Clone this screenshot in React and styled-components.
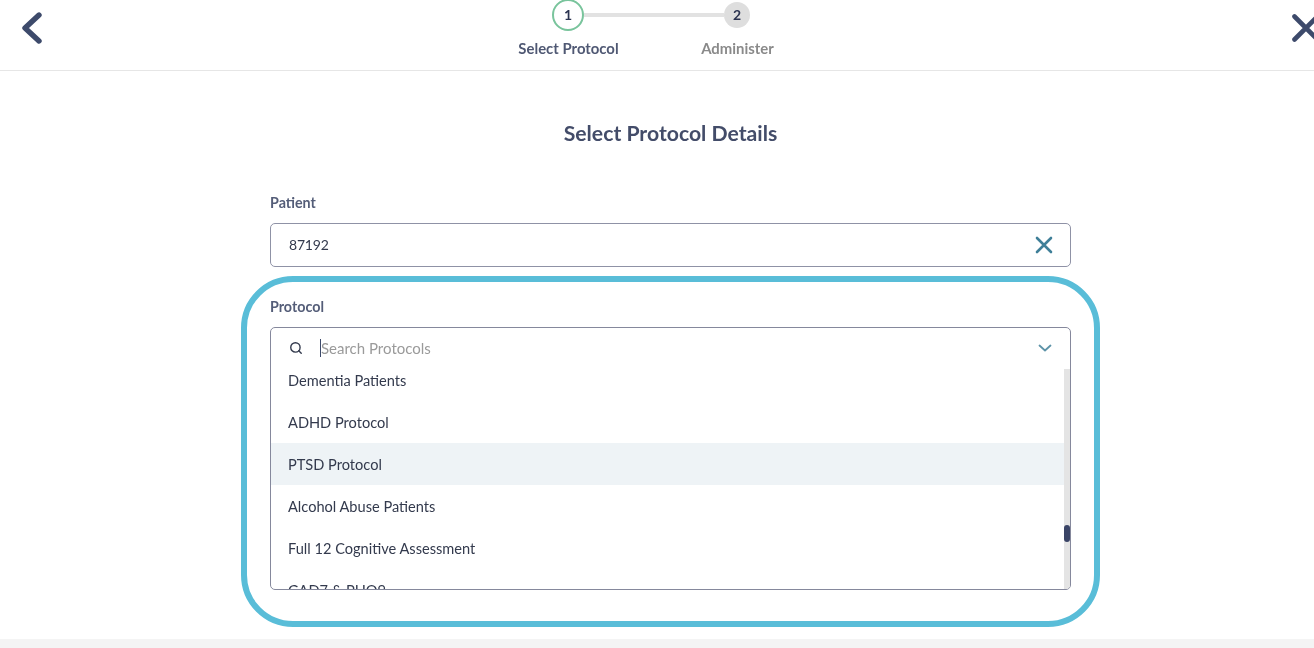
import React from "react";
import styled, { createGlobalStyle } from "styled-components";
import { Search } from "lucide-react";

const protocols = [
  "Dementia Patients",
  "ADHD Protocol",
  "PTSD Protocol",
  "Alcohol Abuse Patients",
  "Full 12 Cognitive Assessment",
  "GAD7 & PHQ9",
];

const App = () => {
  return (
    <Page>
      <GlobalStyle />
      <Header>
        <IconButton $top={12}>
          <svg width="20" height="32" viewBox="0 0 20 32">
            <path d="M17 3L3 16L17 29" fill="none" stroke="#3d4a6b" strokeWidth="5.4" strokeLinecap="round" strokeLinejoin="round" />
          </svg>
        </IconButton>
        <Stepper>
          <Track>
            <StepCircle $active>1</StepCircle>
            <TrackLine />
            <StepCircle>2</StepCircle>
          </Track>
          <StepLabels>
            <StepLabel $active>Select Protocol</StepLabel>
            <StepLabel>Administer</StepLabel>
          </StepLabels>
        </Stepper>
        <IconButton $top={14} $push>
          <svg width="28" height="28" viewBox="0 0 28 28">
            <path d="M2.5 2.5L25.5 25.5M25.5 2.5L2.5 25.5" fill="none" stroke="#3d4a6b" strokeWidth="4.6" strokeLinecap="round" />
          </svg>
        </IconButton>
      </Header>
      <Main>
        <Title>Select Protocol Details</Title>
        <PatientField>
          <Label>Patient</Label>
          <InputBox>
            <Value>87192</Value>
            <svg width="18" height="18" viewBox="0 0 18 18">
              <path d="M2 2L16 16M16 2L2 16" fill="none" stroke="#3f7f98" strokeWidth="2.6" strokeLinecap="round" />
            </svg>
          </InputBox>
        </PatientField>
        <Highlight>
          <Label>Protocol</Label>
          <Select>
            <SearchRow>
              <Search size={14} color="#333a4d" strokeWidth={2.4} />
              <Placeholder>Search Protocols</Placeholder>
              <svg width="14" height="8" viewBox="0 0 14 8">
                <path d="M1.5 1.5L7 6.5L12.5 1.5" fill="none" stroke="#5d93a8" strokeWidth="1.8" strokeLinecap="round" strokeLinejoin="round" />
              </svg>
            </SearchRow>
            <ListArea>
              <List>
                {protocols.map((name) => (
                  <Option key={name} $hovered={name === "PTSD Protocol"}>
                    {name}
                  </Option>
                ))}
              </List>
              <ScrollTrack>
                <ScrollThumb />
              </ScrollTrack>
            </ListArea>
          </Select>
        </Highlight>
      </Main>
      <Footer />
    </Page>
  );
};

const GlobalStyle = createGlobalStyle`
  html, body {
    margin: 0;
    padding: 0;
    height: 100%;
    overflow: hidden;
    background: #fff;
  }
  * {
    box-sizing: border-box;
  }
`;

const Page = styled.div`
  width: 1341px;
  height: 648px;
  display: flex;
  flex-direction: column;
  overflow: hidden;
  font-family: "Lato", "Liberation Sans", sans-serif;
  color: #333a4d;
  filter: blur(0.4px);
`;

const Header = styled.header`
  height: 71px;
  flex: none;
  display: flex;
  align-items: flex-start;
  padding: 0 22px;
  border-bottom: 1px solid #e6e6e6;
`;

const IconButton = styled.div`
  display: flex;
  margin-top: ${(p) => p.$top}px;
  margin-left: ${(p) => (p.$push ? "auto" : "0")};
  margin-right: ${(p) => (p.$push ? "-1px" : "0")};
`;

const Stepper = styled.div`
  width: 338px;
  margin-left: 442px;
  margin-top: -2px;
`;

const Track = styled.div`
  display: flex;
  align-items: center;
  height: 33px;
  padding: 0 72px 0 68px;
`;

const StepCircle = styled.div`
  flex: none;
  display: flex;
  align-items: center;
  justify-content: center;
  width: ${(p) => (p.$active ? "32px" : "26px")};
  height: ${(p) => (p.$active ? "32px" : "26px")};
  border-radius: 50%;
  border: ${(p) => (p.$active ? "2px solid #79c49c" : "none")};
  background: ${(p) => (p.$active ? "#fff" : "#dedede")};
  font-size: 14px;
  font-weight: 700;
  color: #2b3350;
`;

const TrackLine = styled.div`
  flex: 1;
  height: 4px;
  background: #e2e2e2;
`;

const StepLabels = styled.div`
  display: grid;
  grid-template-columns: 169px 169px;
  margin-top: 8px;
`;

const StepLabel = styled.div`
  text-align: center;
  font-size: 14.9px;
  line-height: 18px;
  font-weight: 700;
  color: ${(p) => (p.$active ? "#4f5873" : "#8a8a8a")};
`;

const Main = styled.main`
  width: 859px;
  margin-left: 241px;
  flex: none;
`;

const Title = styled.h1`
  margin: 49px 0 0;
  font-size: 21.2px;
  line-height: 26px;
  font-weight: 700;
  text-align: center;
  color: #434c69;
`;

const PatientField = styled.div`
  margin: 48px 29px 0;
`;

const Label = styled.div`
  font-size: 14.3px;
  line-height: 18px;
  font-weight: 700;
  color: #545d78;
  margin-bottom: 11px;
`;

const InputBox = styled.div`
  height: 44px;
  display: flex;
  align-items: center;
  justify-content: space-between;
  padding: 0 17px 0 18px;
  border: 1px solid #8f92a6;
  border-radius: 5px;
`;

const Value = styled.span`
  font-size: 14px;
  letter-spacing: -0.2px;
  margin-bottom: 2px;
  color: #333a4d;
`;

const Highlight = styled.section`
  height: 351px;
  margin-top: 9px;
  padding: 16px 23px 0;
  border: 6px solid #59bdd8;
  border-radius: 52px;
`;

const Select = styled.div`
  height: 263px;
  display: flex;
  flex-direction: column;
  overflow: hidden;
  border: 1px solid #85889c;
  border-radius: 5px;
`;

const SearchRow = styled.div`
  height: 41px;
  flex: none;
  display: flex;
  align-items: center;
  padding: 0 18px 2px;
`;

const Placeholder = styled.div`
  flex: 1;
  margin-left: 17px;
  border-left: 1px solid #3d4a6b;
  font-size: 15px;
  line-height: 18px;
  color: #9a9a9a;
`;

const ListArea = styled.div`
  flex: 1;
  display: flex;
  min-height: 0;
`;

const List = styled.ul`
  flex: 1;
  margin: -10px 0 0;
  padding: 0;
  list-style: none;
`;

const Option = styled.li`
  height: 42px;
  display: flex;
  align-items: center;
  padding: 0 17px;
  font-size: 14.6px;
  color: #333a4d;
  background: ${(p) => (p.$hovered ? "#eef3f6" : "transparent")};
`;

const ScrollTrack = styled.div`
  width: 6px;
  flex: none;
  padding-top: 156px;
  background: #e4e4e4;
`;

const ScrollThumb = styled.div`
  height: 17px;
  border-radius: 3px;
  background: #3a4466;
`;

const Footer = styled.footer`
  flex: 1;
  margin-top: 12px;
  background: #f4f4f4;
`;

export default App;
